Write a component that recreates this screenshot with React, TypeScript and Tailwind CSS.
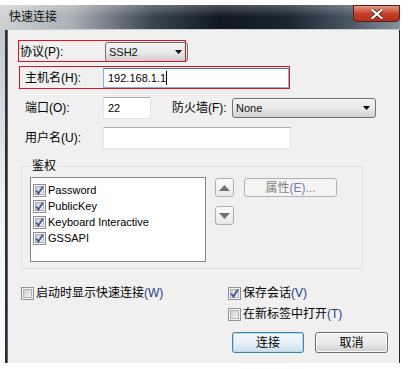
import React from 'react';

const font = "font-['Liberation_Sans','Noto_Sans_CJK_SC',sans-serif]";

function Check({ on }: { on?: boolean }) {
  return (
    <svg width="13" height="13" viewBox="0 0 13 13" className="shrink-0">
      <defs>
        <linearGradient id="cbg" x1="0" y1="0" x2="1" y2="1">
          <stop offset="0" stopColor="#c9ccd1" />
          <stop offset="1" stopColor="#f6f6f6" />
        </linearGradient>
      </defs>
      <rect x="0.5" y="0.5" width="12" height="12" fill="#f4f4f4" stroke="#8e8f8f" />
      <rect x="2.5" y="2.5" width="8" height="8" fill="url(#cbg)" stroke="#aeb2b7" />
      {on && <path d="M3.2 6.4 L5.4 9.6 L10 2.6" stroke="#3a5a9c" strokeWidth="1.8" fill="none" />}
    </svg>
  );
}

function Combo({ value, w }: { value: string; w: string }) {
  return (
    <div
      className={`${w} h-[20px] flex items-center rounded-[3px] border border-[#707070] bg-gradient-to-b from-[#f3f3f3] via-[#e9e9e9] to-[#d0d0d0] pl-[3px] text-[11px]`}
    >
      <span className="flex-1 text-[#111]">{value}</span>
      <svg width="7" height="4" viewBox="0 0 7 4" className="mr-[5px]">
        <path d="M0 0h7L3.5 4z" fill="#000" />
      </svg>
    </div>
  );
}

function TriButton({ up }: { up?: boolean }) {
  return (
    <div className="w-[19px] h-[19px] rounded-[3px] border border-[#b0b0b0] bg-gradient-to-b from-[#fbfbfb] to-[#e8e8e8] flex items-center justify-center">
      <svg width="11" height="6" viewBox="0 0 11 6">
        <path d={up ? 'M0 6h11L5.5 0z' : 'M0 0h11L5.5 6z'} fill="#707070" />
      </svg>
    </div>
  );
}

export default function App() {
  const methods = ['Password', 'PublicKey', 'Keyboard Interactive', 'GSSAPI'];

  return (
    <div className={`w-[408px] h-[369px] bg-white overflow-hidden text-[12px] leading-[14px] text-black ${font}`}>
      <div className="w-[400px] flex flex-col">
        <div className="h-[5px]" />
        {/* Title bar */}
        <div className="relative h-[25px] bg-[linear-gradient(90deg,#cfd2d5_0%,#a9afb5_18%,#3a4550_38%,#0f1821_55%,#1a2530_72%,#4c5966_88%,#8794a0_100%)]">
          <div className="absolute inset-x-0 top-0 h-[12px] bg-gradient-to-b from-white/25 to-transparent" />
          <span className="absolute left-[9px] top-[5px] text-[12px] leading-[14px] text-[#111]">快速连接</span>
          <div className="absolute right-0 top-0 w-[47px] h-[17px] rounded-b-[4px] border border-[#5a1e14] bg-gradient-to-b from-[#e39a86] via-[#c4402a] to-[#b3301c] flex items-center justify-center">
            <svg width="12" height="10" viewBox="0 0 12 10">
              <path d="M1.5 1 L10.5 9 M10.5 1 L1.5 9" stroke="#3a1710" strokeWidth="3.6" strokeLinecap="square" />
              <path d="M1.5 1 L10.5 9 M10.5 1 L1.5 9" stroke="#ffffff" strokeWidth="2.2" strokeLinecap="square" />
            </svg>
          </div>
          <div className="absolute inset-x-0 bottom-0 h-[1px] bg-[#c8ccd0]" />
        </div>

        <div className="flex h-[333px]">
          <div className="w-[5px] bg-gradient-to-b from-[#c4c8cc] via-[#eef0f1] to-white" />
          <div className="w-[3px] bg-[#2b3036] border-r border-[#5c636b]" />

          {/* Client area */}
          <div className="relative w-[391px] bg-[#f0f0f0] flex flex-col">
            {/* protocol */}
            <div className="mt-[12px] h-[20px] flex items-center">
              <span className="ml-[12px] w-[85px]">协议(P):</span>
              <Combo value="SSH2" w="w-[83px]" />
            </div>

            {/* host */}
            <div className="mt-[6px] h-[20px] flex items-center">
              <span className="ml-[17px] w-[78px]">主机名(H):</span>
              <div className="w-[186px] h-[20px] bg-white border border-[#7eb4ea] border-t-[#3d7bad] flex items-center pl-[4px] text-[11px]">
                192.168.1.1
                <span className="w-[1px] h-[14px] bg-black" />
              </div>
            </div>

            {/* port / firewall */}
            <div className="mt-[9px] h-[22px] flex items-center">
              <span className="ml-[17px] w-[78px]">端口(O):</span>
              <div className="w-[48px] h-[22px] bg-white border border-[#e2e3ea] border-t-[#abadb3] flex items-center pl-[4px] text-[11px]">
                22
              </div>
              <span className="ml-[21px] w-[60px]">防火墙(F):</span>
              <Combo value="None" w="w-[144px]" />
            </div>

            {/* user */}
            <div className="mt-[8px] h-[22px] flex items-center">
              <span className="ml-[17px] w-[78px]">用户名(U):</span>
              <div className="w-[188px] h-[22px] bg-white border border-[#e2e3ea] border-t-[#abadb3]" />
            </div>

            {/* auth group */}
            <fieldset className="mt-[10px] ml-[13px] w-[342px] h-[110px] rounded-[3px] border border-[#d5dfe5] pl-[9px] pr-0 pb-[6px]">
              <legend className="px-[1px] leading-[14px]">鉴权</legend>
              <div className="flex items-start mt-[4px] -ml-[1px]">
                <div className="w-[176px] h-[85px] bg-white border border-[#828790] flex flex-col pt-[4px] pl-[2px]">
                  {methods.map((m) => (
                    <div key={m} className="h-[16px] flex items-center gap-[2px] text-[11px]">
                      <Check on />
                      <span>{m}</span>
                    </div>
                  ))}
                </div>
                <div className="ml-[9px] mt-[1px] flex flex-col gap-[9px]">
                  <TriButton up />
                  <TriButton />
                </div>
                <div className="ml-[10px] mt-[1px] w-[93px] h-[19px] rounded-[3px] border border-[#adb2b5] bg-[#f4f4f4] flex items-center justify-center text-[#838383]">
                  属性<span className="text-[#7080a0]">(E)</span>...
                </div>
              </div>
            </fieldset>

            {/* options */}
            <div className="mt-[17px] h-[14px] flex items-center">
              <div className="ml-[13px] w-[207px] flex items-center gap-[2px]">
                <Check />
                <span>
                  启动时显示快速连接<span className="text-[#1c3a8a]">(W)</span>
                </span>
              </div>
              <div className="flex items-center gap-[2px]">
                <Check on />
                <span>
                  保存会话<span className="text-[#1c3a8a]">(V)</span>
                </span>
              </div>
            </div>
            <div className="mt-[7px] h-[14px] flex items-center">
              <div className="ml-[220px] flex items-center gap-[2px]">
                <Check />
                <span>
                  在新标签中打开<span className="text-[#1c3a8a]">(T)</span>
                </span>
              </div>
            </div>

            {/* buttons */}
            <div className="mt-[11px] flex items-center">
              <button className="ml-[224px] w-[72px] h-[21px] rounded-[3px] border border-[#3c7fb1] bg-gradient-to-b from-[#f4f9fc] via-[#e6f0f7] to-[#cfe0ec] shadow-[inset_0_0_0_1px_#b9dcf3]">
                连接
              </button>
              <button className="ml-[11px] w-[73px] h-[21px] rounded-[3px] border border-[#707070] bg-gradient-to-b from-[#f2f2f2] via-[#ebebeb] to-[#cfcfcf] shadow-[inset_0_0_0_1px_#fcfcfc]">
                取消
              </button>
            </div>

            {/* annotation boxes */}
            <div className="absolute left-[10px] top-[10px] w-[168px] h-[22px] border border-[#e4101c] pointer-events-none" />
            <div className="absolute left-[11px] top-[36px] w-[271px] h-[23px] border border-[#e4101c] pointer-events-none" />
          </div>

          <div className="w-[1px] bg-[#22272c]" />
        </div>
      </div>
    </div>
  );
}
